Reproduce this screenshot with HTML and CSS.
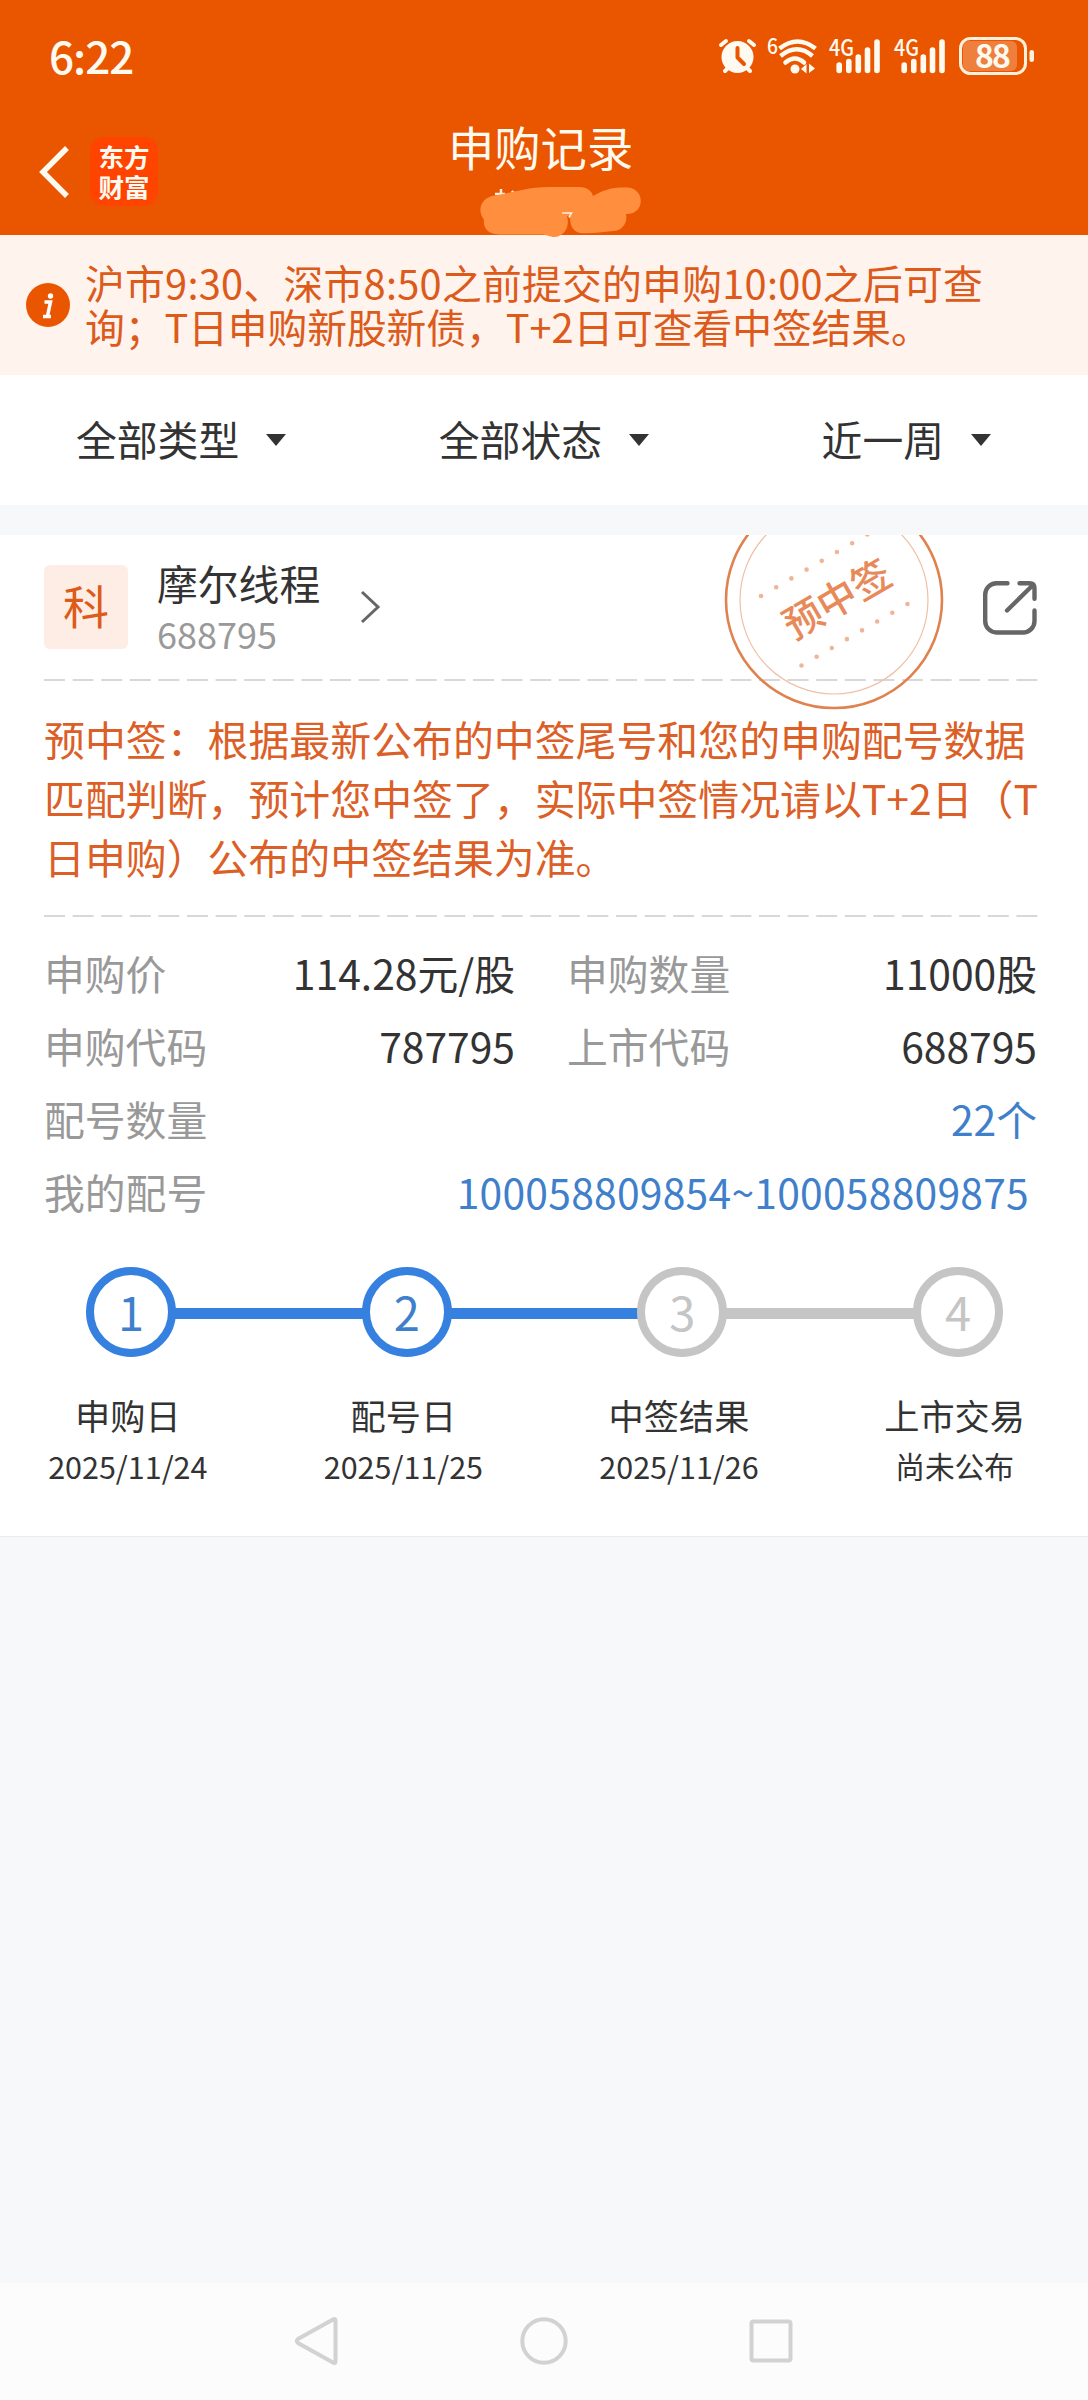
FILE: index.html
```html
<!DOCTYPE html>
<html lang="zh-CN">
<head>
  <meta charset="UTF-8">
  <title>申购记录</title>
  <link rel="stylesheet" href="styles.css">
</head>
<body>

  <header class="header">
    <div class="status-bar">
      <span class="time">6:22</span>
      <!-- alarm, wifi, signal x2, battery -->
      <svg class="status-icons" width="320" height="64" viewBox="716 24 320 64">
        <g stroke="#fffaf0" stroke-width="4" stroke-linecap="round" fill="none">
          <path d="M721 45l5-4M754 45l-5-4M725 71l4-4M750 71l-4-4"/>
        </g>
        <circle cx="737.500" cy="57" r="16" fill="#fffaf0"/>
        <path d="M737.500 48v9.500l6.500 6.500" fill="none" stroke="#ea5500" stroke-width="4" stroke-linecap="round" stroke-linejoin="round"/>
        <text class="tiny" x="767" y="54" font-size="22" textLength="11" lengthAdjust="spacingAndGlyphs">6</text>
        <g stroke="#fffaf0" stroke-width="4.500" fill="none">
          <path d="M779.500 48.500Q797.500 34.500 815.500 48.500"/>
          <path d="M780.500 55.500Q797 42 812.500 55.500" transform="translate(0 .5)"/>
          <path d="M785.500 62.500Q795 54.500 804 62.500" stroke-linecap="round"/>
        </g>
        <circle cx="795" cy="69" r="4.500" fill="#fffaf0"/>
        <path d="M801 69l5.500-5v9.500zM815 68.500l-6-5v9.500z" fill="#fffaf0"/>
        <g id="signal">
          <text class="tiny" x="829" y="56" font-size="23" textLength="25" lengthAdjust="spacingAndGlyphs">4G</text>
          <path d="M839.200 65v5.500M848.800 61.500v9M858.300 57v13.500M867.500 50v20.500M877 42v28.500" stroke="#fffaf0" stroke-width="5.600" stroke-linecap="round"/>
        </g>
        <use href="#signal" x="65"/>
        <rect x="963" y="41" width="54" height="30" rx="6" fill="#ef7f3d"/>
        <rect x="960.500" y="38.500" width="65" height="35" rx="10" fill="none" stroke="#fff0dc" stroke-width="3"/>
        <rect x="1029.500" y="50" width="4.500" height="12" rx="2.200" fill="#fff0dc"/>
        <text class="tiny battery" x="975" y="68" font-size="32" textLength="36">88</text>
      </svg>
    </div>
    <div class="title-bar">
      <svg class="back" width="31" height="52" viewBox="0 0 31 52"><path d="M27 4L5 26l22 22" fill="none" stroke="#fffaf0" stroke-width="5.500" stroke-linecap="square"/></svg>
      <div class="logo">东方<br>财富</div>
      <h1 class="title">申购记录</h1>
    </div>
    <svg class="scribble" width="166" height="56" viewBox="478 184 166 56">
      <path d="M495 194h10M501 189v6M512 191l2 3" stroke="#fff0dc" stroke-width="2.500"/>
      <path d="M484 220C476 209 482 197 495 195.500C515 192 530 187 548 187H579C587 187 592 191 593 196C602 191 611 187.500 620 187.500H628C645 189 645 213 628 214H626C628 223 622 231 613 231C601 232 590 234 580 233C572 231 570 225 570 216L567 216C570 226 565 236 555 237C549 237 547 234.500 541 234.500H499C487 234 483 227 484 220Z" fill="#ff8f3e"/>
      <path d="M562 213h9.500l-2.500 4.500" fill="none" stroke="#fff0dc" stroke-width="1.600"/>
    </svg>
  </header>

  <div class="notice">
    <svg class="info" width="44" height="44" viewBox="0 0 44 44">
      <circle cx="22" cy="22" r="22" fill="#ea5500"/>
      <circle cx="24.500" cy="13" r="2.700" fill="#fff"/>
      <path d="M18.500 19h6l-3 14M17 33.500h8" fill="none" stroke="#fff" stroke-width="3.500"/>
    </svg>
    <div>
      <p class="notice-wide">沪市9:30、深市8:50之前提交的申购10:00之后可查</p>
      <p>询；T日申购新股新债，T+2日可查看中签结果。</p>
    </div>
  </div>

  <div class="filters">
    <div class="filter">全部类型<i class="caret"></i></div>
    <div class="filter">全部状态<i class="caret"></i></div>
    <div class="filter">近一周<i class="caret"></i></div>
  </div>

  <main class="card">
    <div class="stock">
      <div class="badge">科</div>
      <div class="stock-info">
        <div class="stock-name">摩尔线程</div>
        <div class="stock-code">688795</div>
      </div>
      <svg class="more" width="22" height="34" viewBox="0 0 22 34"><path d="M2 2l16 15L2 32" fill="none" stroke="#666" stroke-width="3"/></svg>
      <svg class="share" width="56" height="56" viewBox="0 0 56 56">
        <g fill="none" stroke="#666" stroke-width="4.400" stroke-linecap="round" stroke-linejoin="round">
          <path d="M25.500 3.200H14.500A11.500 11.500 0 0 0 3.200 14.500v26.500a11.500 11.500 0 0 0 11.300 11.500H41a11.500 11.500 0 0 0 11.500-11.500V30.500"/>
          <path d="M37.500 3.200h10q5 0 5 5v10.500M25 30.500L51 5"/>
        </g>
      </svg>
    </div>
    <svg class="dash" width="994" height="2"><path d="M0 1h994" stroke="#ccc" stroke-width="1.500" stroke-dasharray="21 7.600"/></svg>

    <svg class="stamp" width="224" height="224" viewBox="-112 -112 224 224">
      <circle r="108" fill="none" stroke="#e0824f" stroke-width="2.600"/>
      <circle r="94" fill="none" stroke="#f0bfa5" stroke-width="1.200"/>
      <g fill="none" stroke="#f0b496" stroke-width="4.600" stroke-linecap="round">
        <path d="M-73-4L52.400-76.600" stroke-dasharray="0 17.550"/>
        <path d="M-32.500 65.500L75 3.100" stroke-dasharray="0 17.500"/>
      </g>
      <text transform="translate(3 -1) rotate(-30)" x="0" y="14.500" text-anchor="middle">预中签</text>
    </svg>

    <p class="tip">预中签：根据最新公布的中签尾号和您的申购配号数据<br>匹配判断，预计您中签了，实际中签情况请以T+2日（T<br>日申购）公布的中签结果为准。</p>
    <svg class="dash" width="994" height="2"><path d="M0 1h994" stroke="#ccc" stroke-width="1.500" stroke-dasharray="21 7.600"/></svg>

    <div class="details">
      <div class="item"><span class="label">申购价</span><span>114.28元/股</span></div>
      <div class="item"><span class="label">申购数量</span><span>11000股</span></div>
      <div class="item"><span class="label">申购代码</span><span>787795</span></div>
      <div class="item"><span class="label">上市代码</span><span>688795</span></div>
      <div class="item wide"><span class="label">配号数量</span><span class="link">22个</span></div>
      <div class="item wide"><span class="label">我的配号</span><span class="link numbers">100058809854~100058809875</span></div>
    </div>

    <div class="steps">
      <div class="circle done">1</div>
      <div class="line done"></div>
      <div class="circle done">2</div>
      <div class="line done"></div>
      <div class="circle">3</div>
      <div class="line"></div>
      <div class="circle">4</div>
    </div>
    <div class="step-labels">
      <div><div class="step-name">申购日</div><div class="step-date">2025/11/24</div></div>
      <div><div class="step-name">配号日</div><div class="step-date">2025/11/25</div></div>
      <div><div class="step-name">中签结果</div><div class="step-date">2025/11/26</div></div>
      <div><div class="step-name">上市交易</div><div class="step-date pending">尚未公布</div></div>
    </div>
  </main>

  <nav class="nav-bar">
    <svg width="48" height="52" viewBox="0 0 48 52"><path d="M42.500 5.500v41q0 2.500-2.500 1L5 28q-2.500-2 0-4L40 4.500q2.500-1.500 2.500 1z" fill="none" stroke="#d2d2d2" stroke-width="4"/></svg>
    <svg width="48" height="52" viewBox="0 0 48 52"><circle cx="24" cy="26" r="21.700" fill="none" stroke="#d2d2d2" stroke-width="4"/></svg>
    <svg width="48" height="52" viewBox="0 0 48 52"><rect x="4.500" y="6.500" width="39" height="39" rx="2" fill="none" stroke="#d2d2d2" stroke-width="4"/></svg>
  </nav>

</body>
</html>
```
FILE: styles.css
```css
* {
  box-sizing: border-box;
}

body {
  margin: 0;
  width: 1088px;
  height: 2400px;
  display: flex;
  flex-direction: column;
  overflow: hidden;
  background: #f6f8fa;
  color: #333;
  font-family: "Noto Sans CJK SC", sans-serif;
  font-size: 40.8px;
}

p, h1 {
  margin: 0;
}

svg {
  display: block;
  flex: none;
}

/* header */
.header {
  position: relative;
  height: 235px;
  flex: none;
  background: #ea5500;
  color: #fffaf0;
}

.status-bar {
  display: flex;
  justify-content: space-between;
  padding: 24px 52px 0 49px;
  height: 100px;
}

.status-icons {
  overflow: visible;
}

.time {
  font-size: 44px;
  font-weight: 500;
  line-height: 62px;
  letter-spacing: -1px;
}

.tiny {
  fill: #fffaf0;
  font-weight: 500;
}

.battery {
  font-weight: 700;
}

.title-bar {
  display: flex;
  align-items: flex-start;
  padding: 0 38px;
}

.back {
  margin-top: 46px;
}

.logo {
  width: 68px;
  height: 69px;
  margin: 37px 0 0 21px;
  padding-top: 4px;
  border-radius: 14px;
  background: #ff4400;
  font-size: 25.5px;
  font-weight: 700;
  line-height: 30px;
  text-align: center;
}

.title {
  margin: 13px 0 0 290px;
  font-size: 46.3px;
  font-weight: 400;
  line-height: 66px;
}

.scribble {
  position: absolute;
  left: 478px;
  top: 184px;
  z-index: 1;
}

/* notice */
.notice {
  display: flex;
  height: 140px;
  flex: none;
  padding: 25px 0 0 26px;
  background: #fff3ee;
  color: #dc5a1a;
  font-size: 39.8px;
  line-height: 44px;
  white-space: nowrap;
}

.notice p {
  letter-spacing: -0.1px;
}

.notice .notice-wide {
  letter-spacing: 0.25px;
}

.info {
  margin: 23px 15px 0 0;
}

/* filters */
.filters {
  display: flex;
  height: 130px;
  flex: none;
  margin-bottom: 30px;
  padding: 0 97px 4px 76px;
  justify-content: space-between;
  align-items: center;
  background: #fff;
}

.filter {
  display: flex;
  align-items: center;
}

.filter:nth-child(2) {
  margin-right: 20px;
}

.caret {
  margin: 3px 0 0 27px;
  border: 10.5px solid transparent;
  border-top: 12px solid #333;
  border-bottom: 0;
}

/* card */
.card {
  position: relative;
  height: 1002px;
  flex: none;
  padding: 0 50px 0 44px;
  overflow: hidden;
  background: #fff;
  border-bottom: 1px solid #ebebeb;
}

.stock {
  display: flex;
  align-items: flex-start;
  height: 144px;
}

.badge {
  width: 84px;
  height: 84px;
  margin: 30px 29px 0 0;
  border-radius: 6px;
  background: #fdede4;
  color: #dc5a1a;
  font-size: 46px;
  line-height: 79px;
  text-align: center;
}

.stock-info {
  margin-top: 19px;
}

.stock-name {
  line-height: 58px;
}

.stock-code {
  color: #999;
  font-size: 36px;
  line-height: 43px;
}

.more {
  margin: 55px 0 0 40px;
}

.share {
  margin: 45px 0 0 auto;
}

.dash {
  width: 994px;
}

.stamp {
  position: absolute;
  left: 721.5px;
  top: -47.5px;
}

.stamp text {
  fill: #e8895a;
  font-size: 39px;
  font-weight: 500;
}

.tip {
  padding: 28px 0 29px;
  color: #db5f27;
  font-size: 40.9px;
  line-height: 59px;
  white-space: nowrap;
}

.details {
  display: grid;
  grid-template-columns: 471px 470px;
  column-gap: 52px;
  padding-top: 19px;
}

.item {
  display: flex;
  justify-content: space-between;
  line-height: 73px;
}

.wide {
  grid-column: 1 / 3;
}

.label {
  color: #999;
}

.link {
  color: #3f7fcb;
}

.numbers {
  padding-right: 8px;
  letter-spacing: 0.25px;
}

.steps {
  display: flex;
  align-items: center;
  margin-top: 39px;
  padding: 0 35px 0 42px;
}

.circle {
  width: 90px;
  height: 90px;
  flex: none;
  border: 8px solid #c5c5c5;
  border-radius: 50%;
  color: #c5c5c5;
  font-size: 47px;
  line-height: 71px;
  text-align: center;
}

.circle.done {
  border-color: #3681e0;
  color: #3f7fcb;
}

.line {
  flex: 1;
  height: 11px;
  margin: 3px -1px 0;
  background: #c5c5c5;
}

.line.done {
  background: #3681e0;
}

.step-labels {
  display: grid;
  grid-template-columns: repeat(4, 275.6px);
  margin: 32px 0 0 -54px;
  text-align: center;
}

.step-name {
  font-size: 35.2px;
  line-height: 52px;
}

.step-date {
  font-size: 30.5px;
  line-height: 50px;
}

.pending {
  font-size: 29.7px;
}

/* bottom navigation */
.nav-bar {
  display: flex;
  height: 117px;
  margin-top: auto;
  padding: 32px 0 0 293px;
  gap: 179px;
  background: #fcfcfc;
}
```
